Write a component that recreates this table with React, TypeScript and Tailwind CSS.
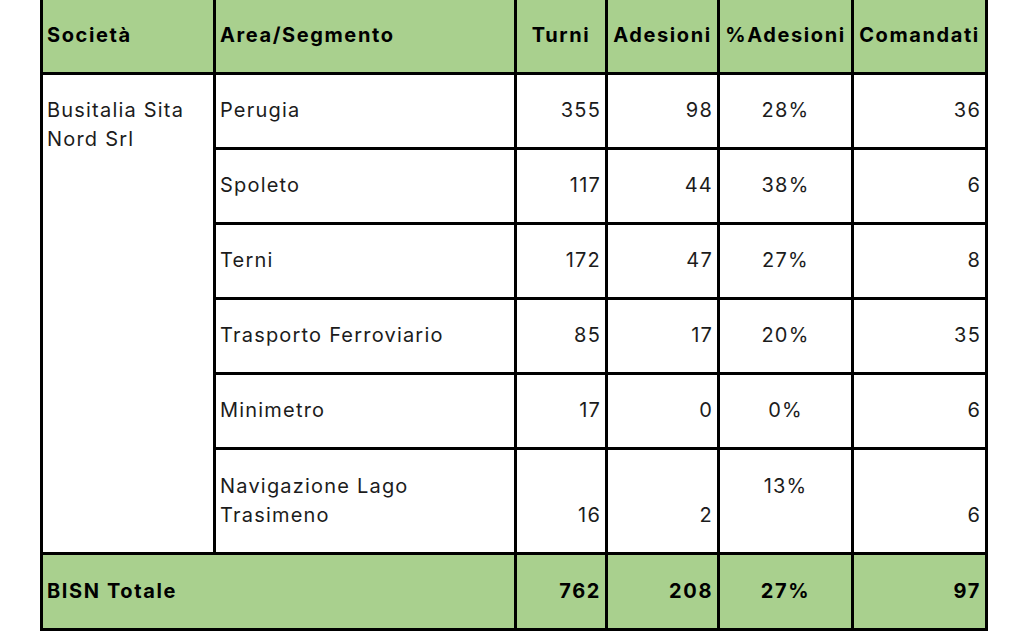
const rows = [
  { area: 'Perugia', turni: '355', adesioni: '98', perc: '28%', comandati: '36' },
  { area: 'Spoleto', turni: '117', adesioni: '44', perc: '38%', comandati: '6' },
  { area: 'Terni', turni: '172', adesioni: '47', perc: '27%', comandati: '8' },
  { area: 'Trasporto Ferroviario', turni: '85', adesioni: '17', perc: '20%', comandati: '35' },
  { area: 'Minimetro', turni: '17', adesioni: '0', perc: '0%', comandati: '6' },
  { area: 'Navigazione Lago Trasimeno', turni: '16', adesioni: '2', perc: '13%', comandati: '6' },
];

const cell = 'border-[3px] border-black px-[4px] pt-[21px] pb-[22px] leading-[29px] align-bottom';

export default function App() {
  return (
    <div
      className="min-h-screen bg-white pl-[40px] text-[20px] tracking-[0.06em] text-[#1c1c1c]"
      style={{ fontFamily: 'Inter, "Noto Sans", sans-serif' }}
    >
      <table className="border-collapse table-fixed w-[945px]">
        <colgroup>
          <col className="w-[173px]" />
          <col className="w-[301px]" />
          <col className="w-[91px]" />
          <col className="w-[112px]" />
          <col className="w-[134px]" />
          <col className="w-[134px]" />
        </colgroup>
        <thead>
          <tr className="bg-[#a9d08e] font-bold text-black tracking-[0.08em]">
            <th className={`${cell} border-t-0 text-left pt-[20px]`}>Società</th>
            <th className={`${cell} border-t-0 text-left pt-[20px]`}>Area/Segmento</th>
            <th className={`${cell} border-t-0 text-center pt-[20px]`}>Turni</th>
            <th className={`${cell} border-t-0 text-center pt-[20px] px-0`}>Adesioni</th>
            <th className={`${cell} border-t-0 text-center pt-[20px] px-0`}>%Adesioni</th>
            <th className={`${cell} border-t-0 text-center pt-[20px] px-0`}>Comandati</th>
          </tr>
        </thead>
        <tbody>
          {rows.map((r, i) => {
            const last = i === rows.length - 1 ? 'pt-[22px]' : '';
            return (
              <tr key={r.area}>
                {i === 0 && (
                  <td rowSpan={rows.length} className={`${cell} !align-top`}>
                    Busitalia Sita Nord Srl
                  </td>
                )}
                <td className={`${cell} ${last} text-left`}>{r.area}</td>
                <td className={`${cell} ${last} text-right`}>{r.turni}</td>
                <td className={`${cell} ${last} text-right`}>{r.adesioni}</td>
                <td className={`${cell} ${last} text-center !align-top`}>{r.perc}</td>
                <td className={`${cell} ${last} text-right`}>{r.comandati}</td>
              </tr>
            );
          })}
          <tr className="bg-[#a9d08e] font-bold text-black tracking-[0.08em]">
            <td colSpan={2} className={`${cell} pt-[22px] pb-[21px] text-left`}>BISN Totale</td>
            <td className={`${cell} pt-[22px] pb-[21px] text-right`}>762</td>
            <td className={`${cell} pt-[22px] pb-[21px] text-right`}>208</td>
            <td className={`${cell} pt-[22px] pb-[21px] text-center`}>27%</td>
            <td className={`${cell} pt-[22px] pb-[21px] text-right`}>97</td>
          </tr>
        </tbody>
      </table>
    </div>
  );
}
